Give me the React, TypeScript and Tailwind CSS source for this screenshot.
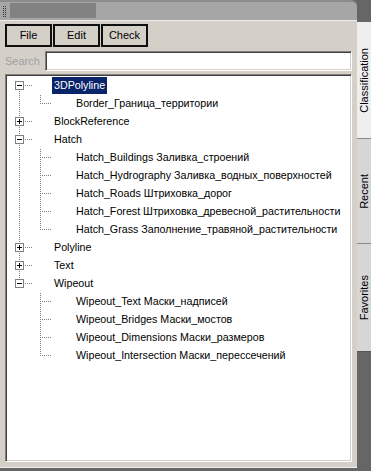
import React from "react";

type Row = {
  label: string;
  level: 0 | 1;
  expanded?: boolean;
  hasChildren?: boolean;
  selected?: boolean;
  firstTop?: boolean;
  lastTop?: boolean;
  lastChild?: boolean;
  parentLast?: boolean;
};

const rows: Row[] = [
  { label: "3DPolyline", level: 0, hasChildren: true, expanded: true, selected: true, firstTop: true },
  { label: "Border_Граница_территории", level: 1, lastChild: true },
  { label: "BlockReference", level: 0, hasChildren: true },
  { label: "Hatch", level: 0, hasChildren: true, expanded: true },
  { label: "Hatch_Buildings Заливка_строений", level: 1 },
  { label: "Hatch_Hydrography Заливка_водных_поверхностей", level: 1 },
  { label: "Hatch_Roads Штриховка_дорог", level: 1 },
  { label: "Hatch_Forest Штриховка_древесной_растительности", level: 1 },
  { label: "Hatch_Grass Заполнение_травяной_растительности", level: 1, lastChild: true },
  { label: "Polyline", level: 0, hasChildren: true },
  { label: "Text", level: 0, hasChildren: true },
  { label: "Wipeout", level: 0, hasChildren: true, expanded: true, lastTop: true },
  { label: "Wipeout_Text Маски_надписей", level: 1, parentLast: true },
  { label: "Wipeout_Bridges Маски_мостов", level: 1, parentLast: true },
  { label: "Wipeout_Dimensions Маски_размеров", level: 1, parentLast: true },
  { label: "Wipeout_Intersection Маски_перессечений", level: 1, parentLast: true, lastChild: true },
];

const DOT = "#808080";

function Lines({ row }: { row: Row }) {
  const w = row.level === 0 ? 45 : 67;
  return (
    <svg width={w} height={18} className="shrink-0 block" shapeRendering="crispEdges">
      {row.level === 0 ? (
        <>
          {!row.firstTop && (
            <line x1={12.5} y1={0} x2={12.5} y2={4} stroke={DOT} strokeDasharray="1 1" />
          )}
          {!row.lastTop && (
            <line x1={12.5} y1={14} x2={12.5} y2={18} stroke={DOT} strokeDasharray="1 1" />
          )}
          <line x1={18} y1={8.5} x2={26} y2={8.5} stroke={DOT} strokeDasharray="1 1" />
          <rect x={8.5} y={4.5} width={8} height={8} fill="#fff" stroke={DOT} />
          <line x1={10} y1={8.5} x2={15} y2={8.5} stroke="#000" />
          {!row.expanded && <line x1={12.5} y1={6} x2={12.5} y2={11} stroke="#000" />}
        </>
      ) : (
        <>
          {!row.parentLast && (
            <line x1={12.5} y1={0} x2={12.5} y2={18} stroke={DOT} strokeDasharray="1 1" />
          )}
          <line
            x1={33.5}
            y1={0}
            x2={33.5}
            y2={row.lastChild ? 9 : 18}
            stroke={DOT}
            strokeDasharray="1 1"
          />
          <line x1={35} y1={8.5} x2={45} y2={8.5} stroke={DOT} strokeDasharray="1 1" />
        </>
      )}
    </svg>
  );
}

function TabLabel({ text }: { text: string }) {
  return (
    <span className="[writing-mode:vertical-rl] rotate-180 text-[11px] leading-[14px] text-black">
      {text}
    </span>
  );
}

export default function App() {
  return (
    <div
      className="w-[371px] h-[471px] bg-[#666666] flex overflow-hidden"
      style={{ fontFamily: '"Liberation Sans", Arial, sans-serif' }}
    >
      {/* left column */}
      <div className="w-[357px] flex flex-col">
        {/* title bar */}
        <div className="h-[20px] bg-[#a6a6a6] border-t-2 border-[#8c8c8c] rounded-tr-[6px] flex items-start">
          <svg width={10} height={16} className="block shrink-0 mt-[2px]" shapeRendering="crispEdges">
            {[0, 1, 2, 3, 4, 5].map((i) => (
              <React.Fragment key={i}>
                <rect x={3} y={2 + i * 2} width={1} height={1} fill="#303030" />
                <rect x={5} y={2 + i * 2} width={1} height={1} fill="#303030" />
              </React.Fragment>
            ))}
          </svg>
          <div className="mt-[1px] w-[86px] h-[15px] bg-[#828282] rounded-[1px]" />
        </div>
        {/* panel */}
        <div className="h-[448px] bg-[#d4d0c8] border-t border-[#ececec] border-b border-b-[#efefef] flex flex-col pl-[5px] pr-[5px] pt-[3px] pb-[5px]">
          {/* buttons */}
          <div className="flex gap-[1px] h-[23px]">
            {["File", "Edit", "Check"].map((b) => (
              <div
                key={b}
                className="w-[47px] h-[23px] border-2 border-[#101010] flex items-center justify-center text-[11px] text-black"
              >
                {b}
              </div>
            ))}
          </div>
          {/* search */}
          <div className="flex items-center mt-[4px] h-[20px]">
            <span className="w-[40px] text-[11px] text-[#a0a0a0]">Search</span>
            <div className="w-[307px] h-[20px] bg-white border border-t-[#808080] border-l-[#808080] border-b-white border-r-white shadow-[inset_1px_1px_0_#404040,inset_-1px_-1px_0_#d4d0c8]" />
          </div>
          {/* tree */}
          <div className="mt-[3px] w-[347px] flex-1 bg-white border border-t-[#808080] border-l-[#808080] border-b-white border-r-white shadow-[inset_1px_1px_0_#404040,inset_-1px_-1px_0_#d4d0c8] p-[1px]">
            <div className="pt-[1px] flex flex-col">
              {rows.map((r, i) => (
                <div key={i} className="flex h-[18px] items-start">
                  <Lines row={r} />
                  <span
                    className={
                      "px-[2px] h-[17px] leading-[17px] text-[10.7px] whitespace-nowrap " +
                      (r.selected ? "bg-[#0a246a] text-white" : "text-black")
                    }
                  >
                    {r.label}
                  </span>
                </div>
              ))}
            </div>
          </div>
        </div>
      </div>
      {/* right tab strip */}
      <div className="w-[14px] flex flex-col pt-[22px]">
        <div className="h-[116px] bg-[#efefef] flex items-center justify-center">
          <TabLabel text="Classification" />
        </div>
        <div className="h-[105px] bg-[#d6d6d6] border-t border-[#8a8a8a] flex items-center justify-center">
          <TabLabel text="Recent" />
        </div>
        <div className="h-[109px] bg-[#d6d6d6] border-t border-[#8a8a8a] border-b border-b-[#555] flex items-center justify-center">
          <TabLabel text="Favorites" />
        </div>
      </div>
    </div>
  );
}
